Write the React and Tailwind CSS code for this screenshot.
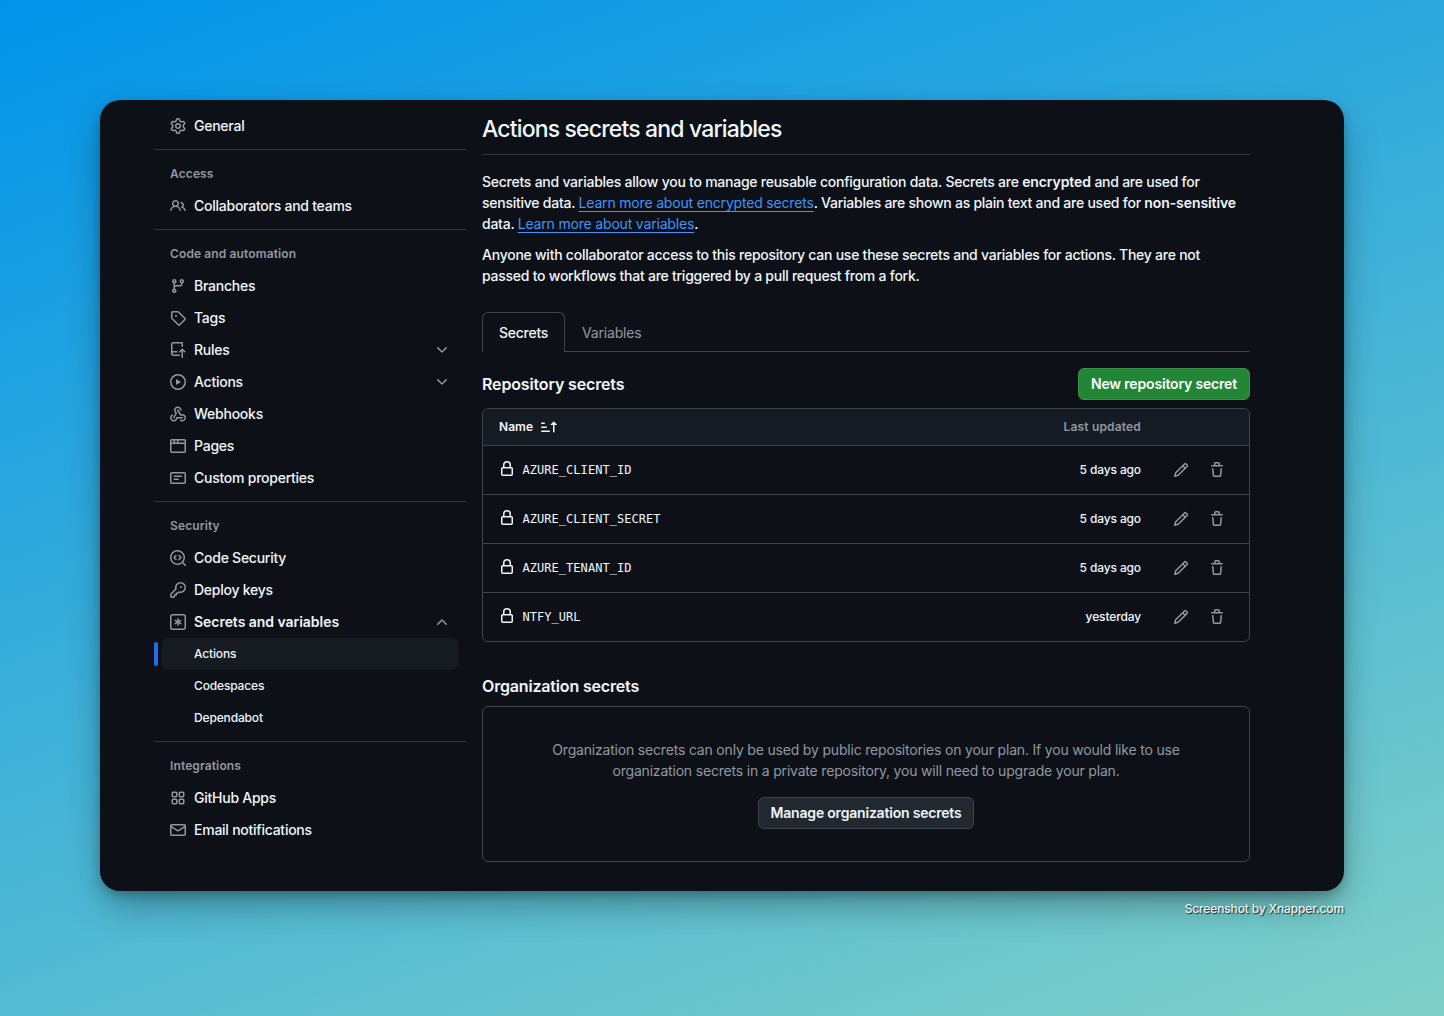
import React from "react";

const ICONS = {
  gear: "M8 0a8.2 8.2 0 0 1 .701.031C9.444.095 9.99.645 10.16 1.29l.288 1.107c.018.066.079.158.212.224.231.114.454.243.668.386.123.082.233.09.299.071l1.103-.303c.644-.176 1.392.021 1.82.63.27.385.506.792.704 1.218.315.675.111 1.422-.364 1.891l-.814.806c-.049.048-.098.147-.088.294.016.257.016.515 0 .772-.01.147.038.246.088.294l.814.806c.475.469.679 1.216.364 1.891a7.977 7.977 0 0 1-.704 1.217c-.428.61-1.176.807-1.82.63l-1.102-.302c-.067-.019-.177-.011-.3.071a5.909 5.909 0 0 1-.668.386c-.133.066-.194.158-.211.224l-.29 1.106c-.168.646-.715 1.196-1.458 1.26a8.006 8.006 0 0 1-1.402 0c-.743-.064-1.289-.614-1.458-1.26l-.289-1.106c-.018-.066-.079-.158-.212-.224a5.738 5.738 0 0 1-.668-.386c-.123-.082-.233-.09-.299-.071l-1.103.303c-.644.176-1.392-.021-1.82-.63a8.12 8.12 0 0 1-.704-1.218c-.315-.675-.111-1.422.363-1.891l.815-.806c.05-.048.098-.147.088-.294a6.214 6.214 0 0 1 0-.772c.01-.147-.038-.246-.088-.294l-.815-.806C.635 6.045.431 5.298.746 4.623a7.92 7.92 0 0 1 .704-1.217c.428-.61 1.176-.807 1.82-.63l1.102.302c.067.019.177.011.3-.071.214-.143.437-.272.668-.386.133-.066.194-.158.211-.224l.29-1.106C6.009.645 6.556.095 7.299.03 7.53.01 7.764 0 8 0Zm-.571 1.525c-.036.003-.108.036-.137.146l-.289 1.105c-.147.561-.549.967-.998 1.189-.173.086-.34.183-.5.29-.417.278-.97.423-1.529.27l-1.103-.303c-.109-.03-.175.016-.195.045-.22.312-.412.644-.573.99-.014.031-.021.11.059.19l.815.806c.411.406.562.957.53 1.456a4.709 4.709 0 0 0 0 .582c.032.499-.119 1.05-.53 1.456l-.815.806c-.081.08-.073.159-.059.19.162.346.353.677.573.989.02.03.085.076.195.046l1.102-.303c.56-.153 1.113-.008 1.53.27.161.107.328.204.501.29.447.222.85.629.997 1.189l.289 1.105c.029.109.101.143.137.146a6.6 6.6 0 0 0 1.142 0c.036-.003.108-.036.137-.146l.289-1.105c.147-.561.549-.967.998-1.189.173-.086.34-.183.5-.29.417-.278.97-.423 1.529-.27l1.103.303c.109.029.175-.016.195-.045.22-.313.411-.644.573-.99.014-.031.021-.11-.059-.19l-.815-.806c-.411-.406-.562-.957-.53-1.456a4.709 4.709 0 0 0 0-.582c-.032-.499.119-1.05.53-1.456l.815-.806c.081-.08.073-.159.059-.19a6.464 6.464 0 0 0-.573-.989c-.02-.03-.085-.076-.195-.046l-1.102.303c-.56.153-1.113.008-1.53-.27a4.44 4.44 0 0 0-.501-.29c-.447-.222-.85-.629-.997-1.189l-.289-1.105c-.029-.11-.101-.143-.137-.146a6.6 6.6 0 0 0-1.142 0ZM11 8a3 3 0 1 1-6 0 3 3 0 0 1 6 0ZM9.5 8a1.5 1.5 0 1 0-3.001.001A1.5 1.5 0 0 0 9.5 8Z",
  people: "M2 5.5a3.5 3.5 0 1 1 5.898 2.549 5.508 5.508 0 0 1 3.034 4.084.75.75 0 1 1-1.482.235 4 4 0 0 0-7.9 0 .75.75 0 0 1-1.482-.236A5.507 5.507 0 0 1 3.102 8.05 3.493 3.493 0 0 1 2 5.5ZM11 4a3.001 3.001 0 0 1 2.22 5.018 5.01 5.01 0 0 1 2.56 3.012.749.749 0 0 1-.885.954.752.752 0 0 1-.549-.514 3.507 3.507 0 0 0-2.522-2.372.75.75 0 0 1-.574-.73v-.352a.75.75 0 0 1 .416-.672A1.5 1.5 0 0 0 11 5.5.75.75 0 0 1 11 4Zm-5.5-.5a2 2 0 1 0-.001 3.999A2 2 0 0 0 5.5 3.5Z",
  branch: "M9.5 3.25a2.25 2.25 0 1 1 3 2.122V6A2.5 2.5 0 0 1 10 8.5H6a1 1 0 0 0-1 1v1.128a2.251 2.251 0 1 1-1.5 0V5.372a2.25 2.25 0 1 1 1.5 0v1.836A2.493 2.493 0 0 1 6 7h4a1 1 0 0 0 1-1v-.628A2.25 2.25 0 0 1 9.5 3.25Zm-6 0a.75.75 0 1 0 1.5 0 .75.75 0 0 0-1.5 0Zm8.25-.75a.75.75 0 1 0 0 1.5.75.75 0 0 0 0-1.5ZM4.25 12a.75.75 0 1 0 0 1.5.75.75 0 0 0 0-1.5Z",
  tag: "M1 7.775V2.75C1 1.784 1.784 1 2.75 1h5.025c.464 0 .91.184 1.238.513l6.25 6.25a1.75 1.75 0 0 1 0 2.474l-5.026 5.026a1.75 1.75 0 0 1-2.474 0l-6.25-6.25A1.752 1.752 0 0 1 1 7.775Zm1.5 0c0 .066.026.13.073.177l6.25 6.25a.25.25 0 0 0 .354 0l5.025-5.025a.25.25 0 0 0 0-.354l-6.25-6.25a.25.25 0 0 0-.177-.073H2.75a.25.25 0 0 0-.25.25ZM6 5a1 1 0 1 1 0 2 1 1 0 0 1 0-2Z",
  repoPush: "M1 2.5A2.5 2.5 0 0 1 3.5 0h8.75a.75.75 0 0 1 .75.75v3.5a.75.75 0 0 1-1.5 0V1.5h-8a1 1 0 0 0-1 1v6.708A2.493 2.493 0 0 1 3.5 9h3.25a.75.75 0 0 1 0 1.5H3.5a1 1 0 0 0 0 2h5.75a.75.75 0 0 1 0 1.5H3.5A2.5 2.5 0 0 1 1 11.5Zm13.23 7.79h-.001l-1.224-1.224v6.184a.75.75 0 0 1-1.5 0V9.066L10.28 10.29a.75.75 0 0 1-1.06-1.061l2.505-2.504a.75.75 0 0 1 1.06 0L15.29 9.23a.751.751 0 0 1-.018 1.042.751.751 0 0 1-1.042.018Z",
  play: "M8 0a8 8 0 1 1 0 16A8 8 0 0 1 8 0ZM1.5 8a6.5 6.5 0 1 0 13 0 6.5 6.5 0 0 0-13 0Zm4.879-2.773 4.264 2.559a.25.25 0 0 1 0 .428l-4.264 2.559A.25.25 0 0 1 6 10.559V5.442a.25.25 0 0 1 .379-.215Z",
  webhook: "M5.5 4.25a2.25 2.25 0 0 1 4.5 0 .75.75 0 0 0 1.5 0 3.75 3.75 0 1 0-6.14 2.889l-2.272 4.258a.75.75 0 0 0 1.324.706L7 7.25a.75.75 0 0 0-.309-1.015A2.25 2.25 0 0 1 5.5 4.25Z M7.364 3.607a.75.75 0 0 1 1.03.257l2.608 4.349a3.75 3.75 0 1 1-.628 6.785.75.75 0 0 1 .752-1.299 2.25 2.25 0 1 0-.033-3.88.75.75 0 0 1-1.03-.256L7.107 4.636a.75.75 0 0 1 .257-1.03Z M2.9 8.776A.75.75 0 0 1 2.625 9.8 2.25 2.25 0 1 0 6 11.75a.75.75 0 0 1 .75-.751h5.5a.75.75 0 0 1 0 1.5H7.425a3.751 3.751 0 1 1-5.55-3.998.75.75 0 0 1 1.024.274Z",
  browser: "M0 2.75C0 1.784.784 1 1.75 1h12.5c.966 0 1.75.784 1.75 1.75v10.5A1.75 1.75 0 0 1 14.25 15H1.75A1.75 1.75 0 0 1 0 13.25ZM14.5 6h-13v7.25c0 .138.112.25.25.25h12.5a.25.25 0 0 0 .25-.25Zm-6-3.5v2h6V2.75a.25.25 0 0 0-.25-.25ZM5 2.5v2h2v-2Zm-3.25 0a.25.25 0 0 0-.25.25V4.5h2v-2Z",
  note: "M0 3.75C0 2.784.784 2 1.75 2h12.5c.966 0 1.75.784 1.75 1.75v8.5A1.75 1.75 0 0 1 14.25 14H1.75A1.75 1.75 0 0 1 0 12.25Zm1.75-.25a.25.25 0 0 0-.25.25v8.5c0 .138.112.25.25.25h12.5a.25.25 0 0 0 .25-.25v-8.5a.25.25 0 0 0-.25-.25ZM3.5 6.25a.75.75 0 0 1 .75-.75h7a.75.75 0 0 1 0 1.5h-7a.75.75 0 0 1-.75-.75Zm.75 2.25h4a.75.75 0 0 1 0 1.5h-4a.75.75 0 0 1 0-1.5Z",
  codescan: "M8.47 4.97a.75.75 0 0 0 0 1.06L9.94 7.5 8.47 8.97a.75.75 0 1 0 1.06 1.06l2-2a.75.75 0 0 0 0-1.06l-2-2a.75.75 0 0 0-1.06 0ZM6.53 6.03a.75.75 0 0 0-1.06-1.06l-2 2a.75.75 0 0 0 0 1.06l2 2a.75.75 0 1 0 1.06-1.06L5.06 7.5l1.47-1.47Z M12.246 13.307a7.501 7.501 0 1 1 1.06-1.06l2.474 2.473a.749.749 0 0 1-.326 1.275.749.749 0 0 1-.734-.215ZM1.5 7.5a6.002 6.002 0 0 0 3.608 5.504 6.002 6.002 0 0 0 6.486-1.117.748.748 0 0 1 .292-.293A6 6 0 1 0 1.5 7.5Z",
  key: "M10.5 0a5.499 5.499 0 1 1-1.288 10.848l-.932.932a.749.749 0 0 1-.53.22H7v.75a.749.749 0 0 1-.22.53l-.5.5a.749.749 0 0 1-.53.22H5v.75a.749.749 0 0 1-.22.53l-.5.5a.749.749 0 0 1-.53.22h-2A1.75 1.75 0 0 1 0 14.25v-2c0-.199.079-.389.22-.53l4.932-4.932A5.5 5.5 0 0 1 10.5 0Zm-4 5.5c-.001.431.069.86.205 1.269a.75.75 0 0 1-.181.768L1.5 12.56v1.69c0 .138.112.25.25.25h1.69l.06-.06v-1.19a.75.75 0 0 1 .75-.75h1.19l.06-.06v-1.19a.75.75 0 0 1 .75-.75h1.19l1.023-1.025a.75.75 0 0 1 .768-.18A4 4 0 1 0 6.5 5.5ZM11 6a1 1 0 1 1 0-2 1 1 0 0 1 0 2Z",
  asterisk: "M0 2.75A2.75 2.75 0 0 1 2.75 0h10.5A2.75 2.75 0 0 1 16 2.75v10.5A2.75 2.75 0 0 1 13.25 16H2.75A2.75 2.75 0 0 1 0 13.25ZM2.75 1.5c-.69 0-1.25.56-1.25 1.25v10.5c0 .69.56 1.25 1.25 1.25h10.5c.69 0 1.25-.56 1.25-1.25V2.75c0-.69-.56-1.25-1.25-1.25ZM8 4a.75.75 0 0 1 .75.75V6.7l1.69-.975a.75.75 0 0 1 .75 1.3L9.5 8l1.69.976a.75.75 0 0 1-.75 1.298L8.75 9.3v1.951a.75.75 0 0 1-1.5 0V9.299l-1.69.976a.75.75 0 0 1-.75-1.3L6.5 8l-1.69-.975a.75.75 0 0 1 .75-1.3l1.69.976V4.75A.75.75 0 0 1 8 4Z",
  apps: "M1.5 3.25c0-.966.784-1.75 1.75-1.75h2.5c.966 0 1.75.784 1.75 1.75v2.5A1.75 1.75 0 0 1 5.75 7.5h-2.5A1.75 1.75 0 0 1 1.5 5.75ZM3.25 3a.25.25 0 0 0-.25.25v2.5c0 .138.112.25.25.25h2.5A.25.25 0 0 0 6 5.75v-2.5A.25.25 0 0 0 5.75 3ZM1.5 10.25c0-.966.784-1.75 1.75-1.75h2.5c.966 0 1.75.784 1.75 1.75v2.5a1.75 1.75 0 0 1-1.75 1.75h-2.5a1.75 1.75 0 0 1-1.75-1.75ZM3.25 10a.25.25 0 0 0-.25.25v2.5c0 .138.112.25.25.25h2.5a.25.25 0 0 0 .25-.25v-2.5a.25.25 0 0 0-.25-.25ZM8.5 3.25c0-.966.784-1.75 1.75-1.75h2.5c.966 0 1.75.784 1.75 1.75v2.5a1.75 1.75 0 0 1-1.75 1.75h-2.5A1.75 1.75 0 0 1 8.5 5.75ZM10.25 3a.25.25 0 0 0-.25.25v2.5c0 .138.112.25.25.25h2.5a.25.25 0 0 0 .25-.25v-2.5a.25.25 0 0 0-.25-.25ZM8.5 10.25c0-.966.784-1.75 1.75-1.75h2.5c.966 0 1.75.784 1.75 1.75v2.5a1.75 1.75 0 0 1-1.75 1.75h-2.5a1.75 1.75 0 0 1-1.75-1.75ZM10.25 10a.25.25 0 0 0-.25.25v2.5c0 .138.112.25.25.25h2.5a.25.25 0 0 0 .25-.25v-2.5a.25.25 0 0 0-.25-.25Z",
  mail: "M1.75 2h12.5c.966 0 1.75.784 1.75 1.75v8.5A1.75 1.75 0 0 1 14.25 14H1.75A1.75 1.75 0 0 1 0 12.25v-8.5C0 2.784.784 2 1.75 2ZM1.5 12.251c0 .138.112.25.25.25h12.5a.25.25 0 0 0 .25-.25V5.809L8.38 9.397a.75.75 0 0 1-.76 0L1.5 5.809v6.442Zm13-8.181v-.32a.25.25 0 0 0-.25-.25H1.75a.25.25 0 0 0-.25.25v.32L8 7.88Z",
  chevron: "M12.78 5.22a.749.749 0 0 1 0 1.06l-4.25 4.25a.749.749 0 0 1-1.06 0L3.22 6.28a.749.749 0 1 1 1.06-1.06L8 8.939l3.72-3.719a.749.749 0 0 1 1.06 0Z",
  sortAsc: "m12.927 2.573 3 3A.25.25 0 0 1 15.75 6H13.5v6.75a.75.75 0 0 1-1.5 0V6H9.75a.25.25 0 0 1-.177-.427l3-3a.25.25 0 0 1 .354 0ZM0 12.25a.75.75 0 0 1 .75-.75h7.5a.75.75 0 0 1 0 1.5H.75a.75.75 0 0 1-.75-.75Zm0-4a.75.75 0 0 1 .75-.75h4.5a.75.75 0 0 1 0 1.5H.75A.75.75 0 0 1 0 8.25Zm0-4a.75.75 0 0 1 .75-.75h2.5a.75.75 0 0 1 0 1.5H.75A.75.75 0 0 1 0 4.25Z",
  lock: "M4 4a4 4 0 0 1 8 0v2h.25c.966 0 1.75.784 1.75 1.75v5.5A1.75 1.75 0 0 1 12.25 15h-8.5A1.75 1.75 0 0 1 2 13.25v-5.5C2 6.784 2.784 6 3.75 6H4Zm8.25 3.5h-8.5a.25.25 0 0 0-.25.25v5.5c0 .138.112.25.25.25h8.5a.25.25 0 0 0 .25-.25v-5.5a.25.25 0 0 0-.25-.25ZM10.5 6V4a2.5 2.5 0 1 0-5 0v2Z",
  pencil: "M11.013 1.427a1.75 1.75 0 0 1 2.474 0l1.086 1.086a1.75 1.75 0 0 1 0 2.474l-8.61 8.61c-.21.21-.47.364-.756.445l-3.251.93a.75.75 0 0 1-.927-.928l.929-3.25c.081-.286.235-.547.445-.758l8.61-8.61Zm.176 4.823L9.75 4.81l-6.286 6.287a.253.253 0 0 0-.064.108l-.558 1.953 1.953-.558a.253.253 0 0 0 .108-.064Zm1.238-3.763a.25.25 0 0 0-.354 0L10.811 3.75l1.439 1.44 1.263-1.263a.25.25 0 0 0 0-.354Z",
  trash: "M11 1.75V3h2.25a.75.75 0 0 1 0 1.5H2.75a.75.75 0 0 1 0-1.5H5V1.75C5 .784 5.784 0 6.75 0h2.5C10.216 0 11 .784 11 1.75ZM4.496 6.675l.66 6.6a.25.25 0 0 0 .249.225h5.19a.25.25 0 0 0 .249-.225l.66-6.6a.75.75 0 0 1 1.492.149l-.66 6.6A1.748 1.748 0 0 1 10.595 15h-5.19a1.75 1.75 0 0 1-1.741-1.575l-.66-6.6a.75.75 0 1 1 1.492-.15ZM6.5 1.75V3h3V1.75a.25.25 0 0 0-.25-.25h-2.5a.25.25 0 0 0-.25.25Z",
};

function Icon({ name, className = "" }) {
  return (
    <svg viewBox="0 0 16 16" className={`size-4 shrink-0 ${className}`} fill="currentColor" aria-hidden="true">
      <path d={ICONS[name]} />
    </svg>
  );
}

const NAV = [
  { items: [{ icon: "gear", label: "General" }] },
  { title: "Access", items: [{ icon: "people", label: "Collaborators and teams" }] },
  {
    title: "Code and automation",
    items: [
      { icon: "branch", label: "Branches" },
      { icon: "tag", label: "Tags" },
      { icon: "repoPush", label: "Rules", collapsed: true },
      { icon: "play", label: "Actions", collapsed: true },
      { icon: "webhook", label: "Webhooks" },
      { icon: "browser", label: "Pages" },
      { icon: "note", label: "Custom properties" },
    ],
  },
  {
    title: "Security",
    items: [
      { icon: "codescan", label: "Code Security" },
      { icon: "key", label: "Deploy keys" },
      { icon: "asterisk", label: "Secrets and variables", children: ["Actions", "Codespaces", "Dependabot"] },
    ],
  },
  {
    title: "Integrations",
    items: [
      { icon: "apps", label: "GitHub Apps" },
      { icon: "mail", label: "Email notifications" },
    ],
  },
];

const SECRETS = [
  { name: "AZURE_CLIENT_ID", updated: "5 days ago" },
  { name: "AZURE_CLIENT_SECRET", updated: "5 days ago" },
  { name: "AZURE_TENANT_ID", updated: "5 days ago" },
  { name: "NTFY_URL", updated: "yesterday" },
];

function NavItem({ item }) {
  return (
    <li>
      <a className="mx-2 flex h-8 items-center gap-2 px-2 leading-5">
        <Icon name={item.icon} className="text-[#9198a1]" />
        {item.children ? (
          <span className="flex-1 pb-px font-semibold tracking-[-0.04px]">{item.label}</span>
        ) : (
          <span className="flex-1 pb-px">{item.label}</span>
        )}
        {item.collapsed && <Icon name="chevron" className="text-[#9198a1]" />}
        {item.children && <Icon name="chevron" className="rotate-180 text-[#9198a1]" />}
      </a>
      {item.children && (
        <ul className="text-xs tracking-[-0.15px]">
          {item.children.map((child, i) => (
            <li key={child} className="flex h-8 items-center">
              <span className={i === 0 ? "h-6 w-1 rounded-md bg-[#1f6feb]" : "h-6 w-1"} />
              <a
                className={
                  i === 0
                    ? "mr-2 ml-1 flex h-8 flex-1 items-center rounded-md bg-[#161b22] pl-8"
                    : "mr-2 ml-1 flex h-8 flex-1 items-center pl-8"
                }
              >
                {child}
              </a>
            </li>
          ))}
        </ul>
      )}
    </li>
  );
}

function Sidebar() {
  return (
    <nav className="w-[312px] shrink-0 pt-2.5">
      {NAV.map((section, i) => (
        <section key={i}>
          {i > 0 && <hr className="mt-[7px] mb-2 border-[#2f353d]" />}
          {section.title && (
            <h3 className="flex h-8 items-center px-4 text-xs font-semibold tracking-[0.12px] text-[#9198a1]">
              {section.title}
            </h3>
          )}
          <ul>
            {section.items.map((item) => (
              <NavItem key={item.label} item={item} />
            ))}
          </ul>
        </section>
      ))}
    </nav>
  );
}

function Link({ children }) {
  return <a className="font-normal tracking-[-0.18px] text-[#4493f8] underline decoration-1 underline-offset-[3px] [text-decoration-skip-ink:none]">{children}</a>;
}

function SecretsTable() {
  return (
    <div className="overflow-hidden rounded-md border border-[#3d444d]">
      <div className="flex h-9 items-center bg-[#151b23] px-4 text-xs font-semibold">
        <span className="tracking-[0.05px]">Name</span>
        <Icon name="sortAsc" className="ml-2" />
        <span className="ml-auto pr-[92px] tracking-[0.17px] text-[#9198a1]">Last updated</span>
      </div>
      {SECRETS.map((secret) => (
        <div key={secret.name} className="flex h-[49px] items-center border-t border-[#3d444d] px-4 text-xs">
          <Icon name="lock" className="mb-0.5" />
          <code className="ml-[7.5px] font-['DejaVu_Sans_Mono',monospace] text-xs tracking-[0.04px]">{secret.name}</code>
          <span className="ml-auto tracking-[-0.13px]">{secret.updated}</span>
          <div className="ml-8 flex gap-5 pr-2 text-[#9198a1]">
            <Icon name="pencil" />
            <Icon name="trash" />
          </div>
        </div>
      ))}
    </div>
  );
}

function Main() {
  return (
    <main className="ml-4 w-[768px] shrink-0 pt-[11px]">
      <h1 className="border-b border-[#2f353d] pb-[7px] text-[23px] leading-9 tracking-[-0.84px]">
        Actions secrets and variables
      </h1>
      <p className="mt-4">
        Secrets and variables allow you to manage reusable configuration data. Secrets are{" "}
        <b className="font-semibold tracking-[-0.09px]">encrypted</b> and are used for
        <br />
        sensitive data. <Link>Learn more about encrypted secrets</Link>. Variables are shown as plain text and are used
        for <b className="font-semibold tracking-[-0.09px]">non-sensitive</b>
        <br />
        data. <Link>Learn more about variables</Link>.
      </p>
      <p className="mt-2.5">
        Anyone with collaborator access to this repository can use these secrets and variables for actions. They are not
        <br />
        passed to workflows that are triggered by a pull request from a fork.
      </p>

      <div className="mt-[26px] flex h-10">
        <div className="flex w-[83px] items-center justify-center rounded-t-md border border-b-0 border-[#3d444d]">
          Secrets
        </div>
        <div className="flex flex-1 items-center border-b border-[#3d444d] pt-px pl-[17px] font-normal tracking-[-0.18px] text-[#9198a1]">
          Variables
        </div>
      </div>

      <div className="mt-4 flex h-8 items-center justify-between">
        <h2 className="text-base font-semibold tracking-[-0.15px]">Repository secrets</h2>
        <button className="flex h-8 w-[172px] items-center justify-center rounded-md border border-[#3a9149] bg-[#238636] pb-px leading-5 font-semibold tracking-[-0.17px] text-white">
          New repository secret
        </button>
      </div>
      <div className="mt-2">
        <SecretsTable />
      </div>

      <h2 className="mt-8 text-base leading-6 font-semibold tracking-[-0.17px]">Organization secrets</h2>
      <div className="mt-2 flex h-[156px] flex-col items-center rounded-md border border-[#3d444d] pt-8 text-center">
        <p className="font-normal tracking-[-0.187px] text-[#9198a1]">
          Organization secrets can only be used by public repositories on your plan. If you would like to use
          <br />
          organization secrets in a private repository, you will need to upgrade your plan.
        </p>
        <button className="mt-4 flex h-8 w-[216px] items-center justify-center rounded-md border border-[#3d444d] bg-[#212830] pb-px leading-5 font-semibold tracking-[-0.2px]">
          Manage organization secrets
        </button>
      </div>
    </main>
  );
}

export default function App() {
  return (
    <div className="h-[1016px] w-[1444px] overflow-hidden bg-[linear-gradient(160deg,#0093e9_0%,#80d0c7_100%)] p-[100px] font-['Inter',sans-serif] text-sm leading-[21px] font-medium tracking-[-0.248px] text-[#f0f6fc]">
      <div className="flex h-[791px] w-[1244px] rounded-[20px] bg-[#0d1117] pl-[54px] shadow-[0_4px_10px_rgba(0,0,0,0.2),0_16px_36px_-4px_rgba(0,0,0,0.35)]">
        <Sidebar />
        <Main />
      </div>
      <div className="mt-2 text-right text-xs leading-5 tracking-[-0.13px] text-white/90 [text-shadow:1px_1px_1px_rgba(0,0,0,0.8)]">
        Screenshot by Xnapper.com
      </div>
    </div>
  );
}
